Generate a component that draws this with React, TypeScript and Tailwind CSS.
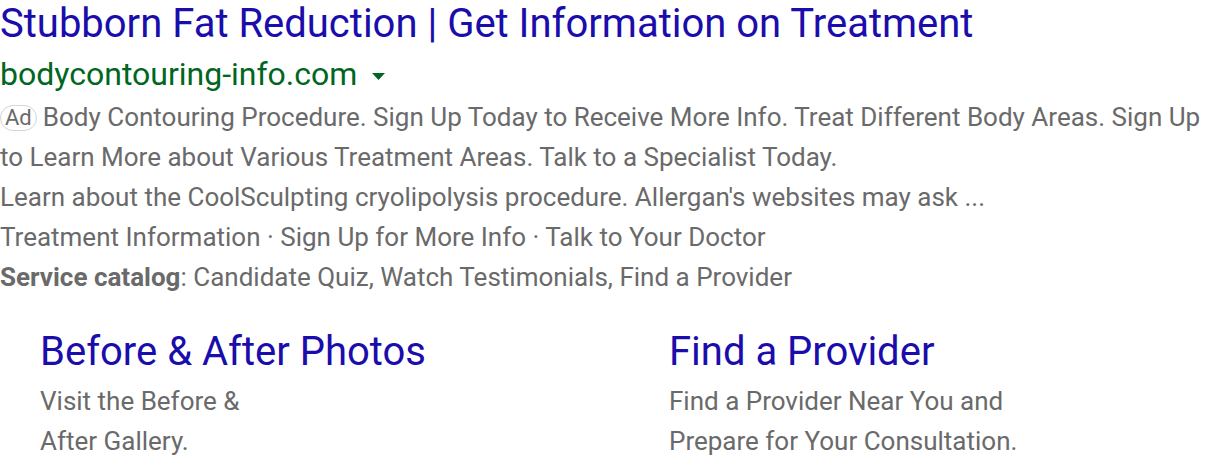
import React from "react";

export default function App() {
  return (
    <div className="w-[1216px] h-[470px] bg-white overflow-hidden" style={{ fontFamily: "Roboto, 'Noto Sans', Arial, sans-serif" }}>
      <div className="text-[40px] leading-[47px] text-[#1a0dab] whitespace-nowrap">
        Stubborn Fat Reduction | Get Information on Treatment
      </div>
      <div className="mt-[5px] flex items-center h-[44px] text-[32px] text-[#006621] whitespace-nowrap">
        <span>bodycontouring-info.com</span>
        <svg width="13" height="7" viewBox="0 0 13 7" className="ml-[15px] mt-[4px]">
          <polygon points="0,0 13,0 6.5,7" fill="#006621" />
        </svg>
      </div>
      <div className="mt-[1px] text-[26px] leading-[40px] text-[#6a6a6a]">
        <div>
          <span className="inline-flex items-center justify-center h-[26px] px-[4px] mr-[6px] border border-[#d4d4d4] rounded-[13px] text-[22px] leading-none text-[#6a6a6a] align-[1px]">Ad</span>
          Body Contouring Procedure. Sign Up Today to Receive More Info. Treat Different Body Areas. Sign Up to Learn More about Various Treatment Areas. Talk to a Specialist Today.
        </div>
        <div>Learn about the CoolSculpting cryolipolysis procedure. Allergan's websites may ask ...</div>
        <div>Treatment Information · Sign Up for More Info · Talk to Your Doctor</div>
        <div>
          <span className="font-bold">Service catalog</span>: Candidate Quiz, Watch Testimonials, Find a Provider
        </div>
      </div>
      <div className="mt-[31px] pl-[40px] grid grid-cols-[629px_1fr]">
        <div>
          <div className="text-[40px] leading-[47px] text-[#1a0dab]">Before &amp; After Photos</div>
          <div className="mt-[6px] text-[26px] leading-[40px] text-[#6a6a6a]">
            <div>Visit the Before &amp;</div>
            <div>After Gallery.</div>
          </div>
        </div>
        <div>
          <div className="text-[40px] leading-[47px] text-[#1a0dab]">Find a Provider</div>
          <div className="mt-[6px] text-[26px] leading-[40px] text-[#6a6a6a]">
            <div>Find a Provider Near You and</div>
            <div>Prepare for Your Consultation.</div>
          </div>
        </div>
      </div>
    </div>
  );
}
